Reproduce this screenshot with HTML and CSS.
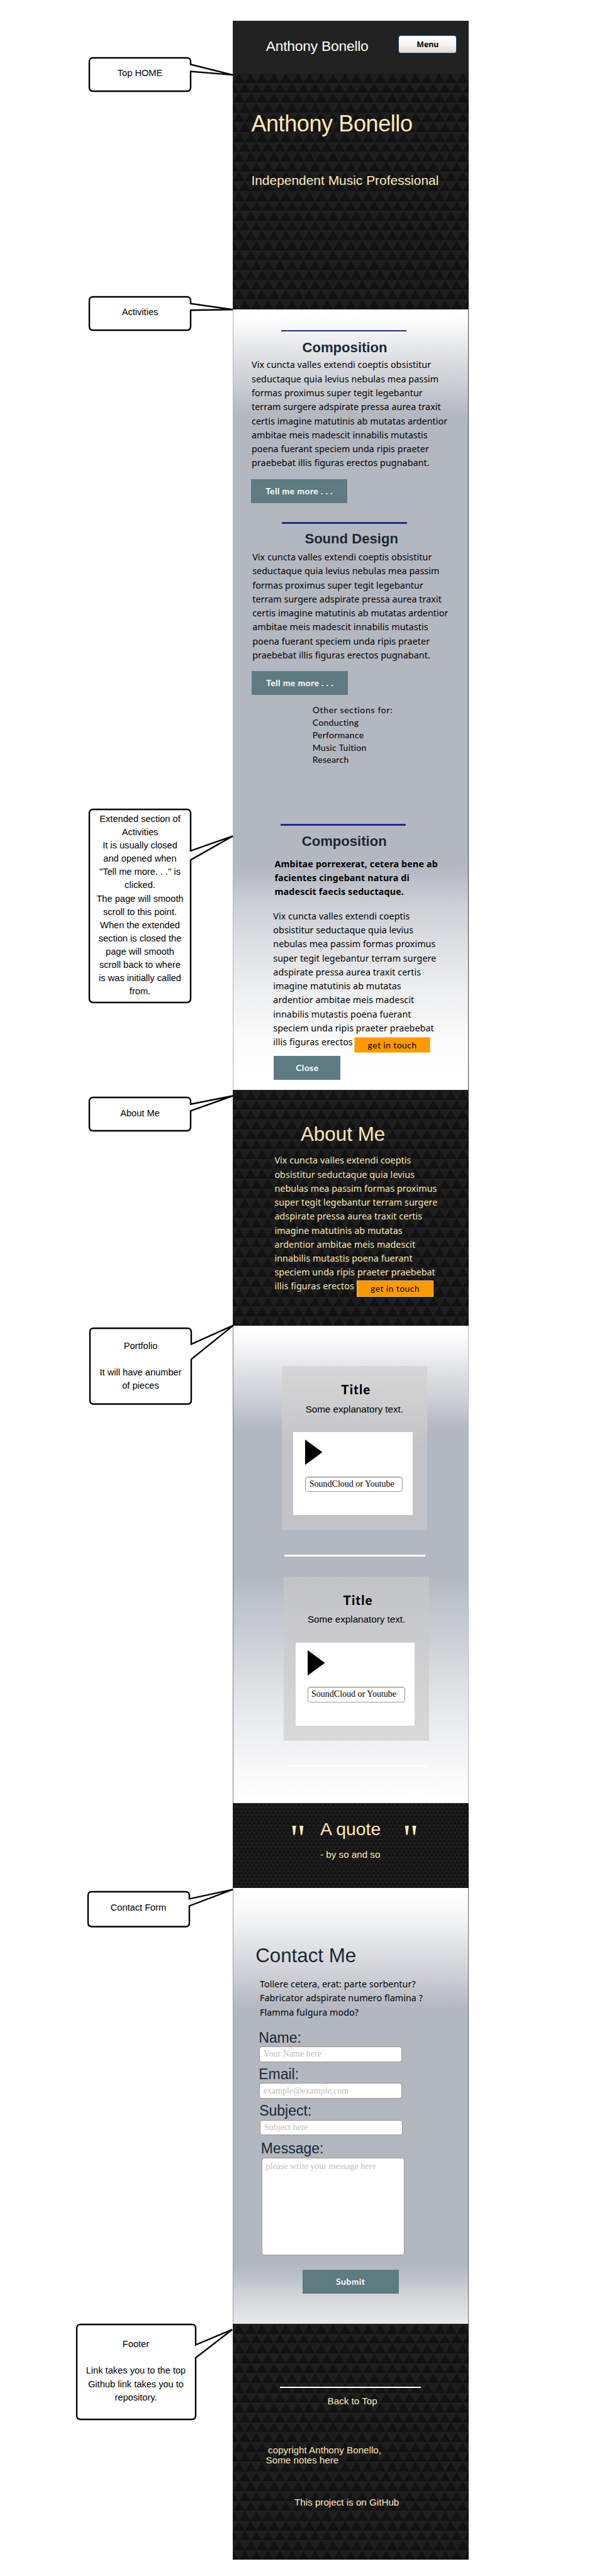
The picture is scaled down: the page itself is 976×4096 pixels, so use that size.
FILE: index.html
```html
<!DOCTYPE html>
<html lang="en">
<head>
<meta charset="utf-8">
<title>Anthony Bonello</title>
<link rel="stylesheet" href="styles.css">
</head>
<body>
<div class="board">
  <aside class="notes">
    <div class="note n-home"><svg class="bubble" width="252" height="60"><path d="M163 12.5V8q0-6-6-6H8q-6 0-6 6v41q0 6 6 6H157q6 0 6-6V23.6L230 29.1Z"/></svg><p>Top HOME</p></div>
    <div class="note n-activities"><svg class="bubble" width="252" height="60"><path d="M163 12.8V8q0-6-6-6H8q-6 0-6 6v41q0 6 6 6H157q6 0 6-6V23.2L230 22.2Z"/></svg><p>Activities</p></div>
    <div class="note n-extended"><svg class="bubble" width="252" height="320"><path d="M163 67.8V8q0-6-6-6H8q-6 0-6 6v295q0 6 6 6H157q6 0 6-6V82.4L230 44.4Z"/></svg><p>Extended section of<br>Activities<br>It is usually closed<br>and opened when<br>"Tell me more. . ." is<br>clicked.<br>The page will smooth<br>scroll to this point.<br>When the extended<br>section is closed the<br>page will smooth<br>scroll back to where<br>is was initially called<br>from.</p></div>
    <div class="note n-about"><svg class="bubble" width="252" height="60"><path d="M163 12.7V8q0-6-6-6H8q-6 0-6 6v41q0 6 6 6H157q6 0 6-6V23.4L230-.5Z"/></svg><p>About Me</p></div>
    <div class="note n-portfolio"><svg class="bubble" width="252" height="130"><path d="M163 27.4V8q0-6-6-6H8q-6 0-6 6v108.500q0 6 6 6H157q6 0 6-6V51.400L230-2.600Z"/></svg><p>Portfolio<br><br>It will have anumber<br>of pieces</p></div>
    <div class="note n-contact"><svg class="bubble" width="252" height="62"><path d="M163 13.300V8q0-6-6-6H8q-6 0-6 6v43.500q0 6 6 6H157q6 0 6-6V24.500L232-1.600Z"/></svg><p>Contact Form</p></div>
    <div class="note n-footer"><svg class="bubble" width="270" height="158"><path d="M191 34.500V8q0-6-6-6H8q-6 0-6 6v139q0 6 6 6H185q6 0 6-6V55L249 10.200Z"/></svg><p>Footer<br><br>Link takes you to the top<br>Github link takes you to<br>repository.</p></div>
  </aside>
  <main class="page">
    <header class="topbar"><span class="brand">Anthony Bonello</span><button class="menu">Menu</button></header>
    <section class="hero tri">
      <h1>Anthony Bonello</h1>
      <p class="tagline">Independent Music Professional</p>
    </section>
    <section class="activities">
      <hr class="rule r1">
      <h2 class="h-a">Composition</h2>
      <p class="copy c-a">Vix cuncta valles extendi coeptis obsistitur<br>seductaque quia levius nebulas mea passim<br>formas proximus super tegit legebantur<br>terram surgere adspirate pressa aurea traxit<br>certis imagine matutinis ab mutatas ardentior<br>ambitae meis madescit innabilis mutastis<br>poena fuerant speciem unda ripis praeter<br>praebebat illis figuras erectos pugnabant.</p>
      <button class="btn b-a">Tell me more . . .</button>
      <hr class="rule r2">
      <h2 class="h-b">Sound Design</h2>
      <p class="copy c-b">Vix cuncta valles extendi coeptis obsistitur<br>seductaque quia levius nebulas mea passim<br>formas proximus super tegit legebantur<br>terram surgere adspirate pressa aurea traxit<br>certis imagine matutinis ab mutatas ardentior<br>ambitae meis madescit innabilis mutastis<br>poena fuerant speciem unda ripis praeter<br>praebebat illis figuras erectos pugnabant.</p>
      <button class="btn b-b">Tell me more . . .</button>
      <p class="others"><span class="wide">Other sections for:</span><br>Conducting<br>Performance<br>Music Tuition<br>Research</p>
      <hr class="rule r3">
      <h2 class="h-c">Composition</h2>
      <p class="lead">Ambitae porrexerat, cetera bene ab<br>facientes cingebant natura di<br>madescit faecis seductaque.</p>
      <p class="copy c-c">Vix cuncta valles extendi coeptis<br>obsistitur seductaque quia levius<br>nebulas mea passim formas proximus<br>super tegit legebantur terram surgere<br>adspirate pressa aurea traxit certis<br>imagine matutinis ab mutatas<br>ardentior ambitae meis madescit<br>innabilis mutastis poena fuerant<br>speciem unda ripis praeter praebebat<br>illis figuras erectos<a class="touch">get in touch</a></p>
      <button class="btn b-c">Close</button>
    </section>
    <section class="about tri">
      <h2>About Me</h2>
      <p class="copy c-d">Vix cuncta valles extendi coeptis<br>obsistitur seductaque quia levius<br>nebulas mea passim formas proximus<br>super tegit legebantur terram surgere<br>adspirate pressa aurea traxit certis<br>imagine matutinis ab mutatas<br>ardentior ambitae meis madescit<br>innabilis mutastis poena fuerant<br>speciem unda ripis praeter praebebat<br>illis figuras erectos<a class="touch">get in touch</a></p>
    </section>
    <section class="portfolio">
      <article class="card k1"><h3>Title</h3><p>Some explanatory text.</p>
        <div class="player"><svg width="28" height="41"><path d="M0 0L27.500 20.100L0 40.200Z"/></svg><div class="source">SoundCloud or Youtube</div></div></article>
      <hr class="line l1">
      <article class="card k2"><h3>Title</h3><p>Some explanatory text.</p>
        <div class="player"><svg width="28" height="41"><path d="M0 0L27.500 20.100L0 40.200Z"/></svg><div class="source">SoundCloud or Youtube</div></div></article>
      <hr class="line l2">
    </section>
    <section class="quote tri">
      <div class="quote-row"><span class="mark">"</span><span class="said">A quote</span><span class="mark">"</span></div>
      <p>- by so and so</p>
    </section>
    <section class="contact">
      <h2>Contact Me</h2>
      <p class="copy c-e">Tollere cetera, erat: parte sorbentur?<br>Fabricator adspirate numero flamina ?<br>Flamma fulgura modo?</p>
      <label class="f1">Name:</label><input class="i1" placeholder="Your Name here">
      <label class="f2">Email:</label><input class="i2" placeholder="example@example.com">
      <label class="f3">Subject:</label><input class="i3" placeholder="Subject here">
      <label class="f4">Message:</label><textarea placeholder="please write your message here"></textarea>
      <button class="btn b-d">Submit</button>
    </section>
    <footer class="foot tri">
      <hr class="line l3">
      <p class="back">Back to Top</p>
      <p class="copyright">copyright Anthony Bonello,<br>Some notes here</p>
      <p class="project">This project is on GitHub</p>
    </footer>
  </main>
</div>
</body>
</html>
```
FILE: styles.css
```css
* { box-sizing: border-box; }
body { margin: 0; background: #fff; color: #000; font-family: "Liberation Sans", Arial, sans-serif; }
h1, h2, h3, p, hr { margin: 0; font-weight: 400; border: 0; }
.board { display: flex; width: 976px; height: 4096px; overflow: hidden; }

/* callouts beside the page */
.notes { display: flex; flex-direction: column; width: 370px; flex: none; }
.note { position: relative; flex: none; width: 165px; margin-left: 140px; font-size: 14.63px; line-height: 21.06px; text-align: center; white-space: nowrap; }
.bubble { position: absolute; left: 0; top: 0; overflow: visible; fill: #fff; stroke: #000; stroke-width: 2.4px; stroke-linejoin: miter; }
.note p { position: relative; }
.n-home { margin-top: 89.5px; height: 56.6px; padding-top: 16.5px; }
.n-activities { margin-top: 323.9px; height: 56.4px; padding-top: 16.5px; }
.n-extended { margin-top: 758.6px; height: 310.5px; padding-top: 7.2px; }
.n-about { margin-top: 147.6px; height: 56.2px; padding-top: 16.7px; }
.n-portfolio { margin-top: 311.2px; margin-left: 141px; height: 123.8px; padding-top: 19.1px; }
.n-contact { margin-top: 771.6px; margin-left: 137.5px; height: 59px; padding-top: 17.5px; }
.n-footer { margin-top: 628.9px; margin-left: 119.5px; height: 154.4px; width: 193px; padding-top: 23.6px; }

/* mobile page */
.page { width: 375px; flex: none; padding-top: 32.9px; }
.page > * { display: flex; flex-direction: column; align-items: flex-start; overflow: hidden; white-space: nowrap; }
.tri {
  color: #ffe8b8; background-color: #1e1e1e;
  background-image: url("data:image/svg+xml,%3Csvg xmlns='http://www.w3.org/2000/svg' viewBox='0 0 32 54' preserveAspectRatio='none'%3E%3Cpath fill='%23121212' d='M0 27L16 1L32 27ZM0 28L16 54H-16ZM32 28L48 54H16Z'/%3E%3C/svg%3E");
  background-size: 18.75px 31.32px;
}
.page > .topbar { flex-direction: row; height: 82.9px; padding: 23.3px 18.8px 0 52.8px; background: #222; color: #fffff0; }
.brand { margin-top: 4.5px; font-size: 22.8px; line-height: 24px; letter-spacing: -.22px; }
.menu { margin-left: auto; width: 92.8px; height: 29.3px; padding: 0; border: 1.5px solid #0b3f79; border-radius: 4px; background: linear-gradient(#fff, #f3f2ef 60%, #ddd6cc); font: 700 12.4px/26px "Noto Sans", sans-serif; color: #000; }
.hero { height: 376.1px; padding: 61.2px 0 0 29.4px; }
h1 { font-size: 36px; line-height: 40px; letter-spacing: -.4px; }
.tagline { margin-top: 58.5px; font-size: 20.94px; line-height: 24px; }

.activities { height: 1240.7px; box-shadow: inset 1px 0 #b0b3b8, inset -1px 0 #444;
  background: linear-gradient(#fff 0, #fdfdfd 17px, #eff0f1 43px, #dfe0e4 74px, #cacdd2 121px, #b6b9c2 163px, #b3b7c0 178px, #b3b7c0 875px, #b7bac3 895px, #cacdd2 940px, #dfe0e4 1012px, #eff0f1 1090px, #fbfbfb 1160px, #fff 1235px); }
.rule { width: 199.2px; height: 2.5px; background: #1c2f87; }
.activities h2 { font-size: 22.1px; line-height: 26px; font-weight: 700; color: #1a2833; }
.copy, .lead { position: relative; font-family: "Noto Sans", sans-serif; font-size: 14.3px; line-height: 22.24px; letter-spacing: .07px; }
.lead { font-weight: 700; letter-spacing: .17px; }
.r1 { margin: 32.9px 0 0 77px; }
.h-a { margin: 12.5px 0 0 110.5px; }
.c-a { margin: 3.6px 0 0 30px; line-height: 22.3px; }
.btn { flex: none; padding: 0; border: 0; background: #5d7b80; color: #fff; font: 700 14px/36px Lato, sans-serif; letter-spacing: .4px; }
.b-a { margin: 14.1px 0 0 28.6px; width: 153.6px; height: 38.1px; }
.r2 { margin: 30.4px 0 0 78.3px; }
.h-b { margin: 11.1px 0 0 114.4px; }
.c-b { margin: 5.2px 0 0 31.2px; }
.b-b { margin: 14.3px 0 0 29.9px; width: 153.2px; height: 37.7px; }
.others { margin: 13.9px 0 0 126.7px; font: 14px/19.9px Lato, sans-serif; letter-spacing: .3px; }
.wide { letter-spacing: .67px; }
.r3 { margin: 91.7px 0 0 75.8px; }
.h-c { margin: 12.7px 0 0 109.7px; }
.lead { margin: 11.6px 0 0 66.4px; }
.c-c { margin: 16.4px 0 0 64.3px; }
.touch { position: absolute; left: 128.9px; top: 202.9px; width: 120.7px; height: 25.3px; border: 1px solid #ffc861; background: #f90; color: #000; text-align: center; font: 14px/23px Lato, sans-serif; letter-spacing: .4px; }
.b-c { margin: 10.9px 0 0 65.2px; width: 106.3px; height: 37.8px; }

.about { height: 375.4px; }
.about h2 { margin: 53.6px 0 0 107.9px; font-size: 31.4px; line-height: 36px; }
.c-d { margin: 12.2px 0 0 66.4px; }
.c-d .touch { left: 130.9px; top: 202.1px; width: 121.5px; }

.portfolio { height: 758.6px; box-shadow: inset 1px 0 #777, inset -1px 0 #b5b8bd;
  background: linear-gradient(#fff 0, #fbfbfb 17px, #eff0f1 45px, #dfe0e4 75px, #cacdd2 121px, #b6b9c2 160px, #b3b7c0 175px, #b3b7c0 398px, #c1c5cd 450px, #cfd2d6 515px, #dfe0e4 570px, #eff0f3 655px, #f9f9f9 712px, #fff 755px); }
.card { display: flex; flex-direction: column; flex: none; width: 231.6px; height: 261.2px; padding-top: 23.2px; color: #000; }
.k1 { margin: 64.1px 0 0 77.5px; background: linear-gradient(#d7d7d7, #c3c3c7 50%); }
.k2 { margin: 32px 0 0 80.8px; background: linear-gradient(#c2c3c5, #d9d9d9); }
.card h3 { padding-left: 5px; text-align: center; font: 900 20.5px/28px Lato, sans-serif; letter-spacing: 1.1px; }
.card p { margin-top: 7.4px; text-align: center; font-size: 15.2px; line-height: 20px; }
.player { margin: 26.4px 0 0 18.9px; width: 189.2px; height: 132.2px; padding: 12.3px 0 0 18.9px; background: #fff; }
.player svg { display: block; }
.source { margin-top: 17.3px; width: 155.1px; height: 24.5px; padding-left: 5.5px; border: 1px solid #a39685; border-radius: 4px; font: 14px/22.5px "Liberation Serif", serif; box-shadow: inset 0 1px 1px #ccc; }
.line { flex: none; height: 2.6px; width: 223.7px; background: #fff; }
.l1 { margin: 39px 0 0 82.4px; }
.l2 { margin: 38.7px 0 0 85.7px; }

.quote { height: 135.3px; padding-top: 25.3px; background-size: 6.8px 11.33px; }
.quote-row { display: flex; height: 47.2px; margin-left: 90.7px; }
.mark { margin-top: 10.2px; width: 25.3px; font: 62px/40px "Liberation Serif", serif; }
.said { margin: 0 34.6px 0 23px; font-size: 28.4px; line-height: 32px; }
.quote p { margin-left: 139px; font-size: 15.2px; line-height: 20px; }

.contact { height: 693.3px; box-shadow: inset 1px 0 #999, inset -1px 0 #666;
  background: linear-gradient(#fff 0, #fbfbfb 25px, #eff0f1 60px, #dfe0e4 97px, #cacdd2 145px, #b9bcc4 180px, #b3b7c0 196px, #b3b7c0 600px, #bfc2ca 622px, #cfd2d6 642px, #dfe0e4 675px, #e9eaec 693px); }
.contact h2 { margin: 90.1px 0 0 36.2px; font-size: 31.3px; line-height: 36px; color: #1a2833; }
.c-e { margin: 16.1px 0 0 43px; line-height: 22.3px; }
label { font-size: 23px; line-height: 26px; color: #1a2833; }
input, textarea { flex: none; width: 227px; padding: 0 6px; border: 1.5px solid #a39685; border-radius: 4px; background: #fff; font: 14px/22px "Liberation Serif", serif; resize: none; }
::placeholder { color: #c0c0c0; opacity: 1; }
.f1 { margin: 15.8px 0 0 41.2px; }
.i1 { margin: 1px 0 0 41.8px; height: 24.9px; }
.f2 { margin: 6.2px 0 0 41.2px; }
.i2 { margin: 1.7px 0 0 41.8px; height: 24.2px; }
.f3 { margin: 6.5px 0 0 42.2px; }
.i3 { margin: 1.7px 0 0 43px; height: 24.2px; }
.f4 { margin: 7.9px 0 0 44.7px; }
textarea { margin: 1.7px 0 0 45.5px; height: 155.8px; padding-top: 2px; }
.b-d { margin: 22.5px 0 0 110.7px; width: 153.1px; height: 37.7px; }

.foot { height: 375.3px; font-size: 15.2px; line-height: 20px; }
.l3 { margin: 99.4px 0 0 75.1px; }
.back { margin: 10.9px 0 0 150.6px; }
.copyright { margin: 59.6px 0 0 52.6px; line-height: 16px; text-indent: 3.5px; }
.copyright::first-line { letter-spacing: 0; }
.project { margin: 48.9px 0 0 98px; }
```
